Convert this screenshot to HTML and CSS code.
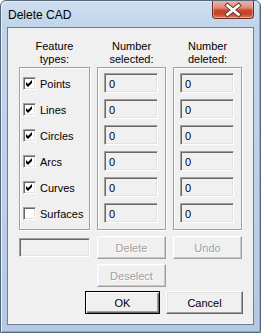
FILE: index.html
```html
<!DOCTYPE html>
<html>
<head>
<meta charset="utf-8">
<title>Delete CAD</title>
<link rel="stylesheet" href="styles.css">
</head>
<body>
<div class="window">
  <div class="titlebar">
    <span class="title">Delete CAD</span>
    <div class="close">
      <svg width="42" height="17" viewBox="0 0 42 17">
        <path d="M15.5 4.5 L26.5 13.5 M26.5 4.5 L15.5 13.5" stroke="#6b3a34" stroke-width="4.6" stroke-linecap="square" fill="none"/>
        <path d="M15.5 4.5 L26.5 13.5 M26.5 4.5 L15.5 13.5" stroke="#ffffff" stroke-width="2.6" stroke-linecap="square" fill="none"/>
      </svg>
    </div>
  </div>
  <div class="client">
    <div class="cols">
      <div class="head">Feature<br>types:</div>
      <div class="head">Number<br>selected:</div>
      <div class="head">Number<br>deleted:</div>

      <div class="group types">
        <div class="chk-row"><span class="chk"><svg width="9" height="9" viewBox="0 0 9 9"><polygon points="1,3 3,5 7,1 7,4 3,8 1,6" fill="#000"/></svg></span><span>Points</span></div>
        <div class="chk-row"><span class="chk"><svg width="9" height="9" viewBox="0 0 9 9"><polygon points="1,3 3,5 7,1 7,4 3,8 1,6" fill="#000"/></svg></span><span>Lines</span></div>
        <div class="chk-row"><span class="chk"><svg width="9" height="9" viewBox="0 0 9 9"><polygon points="1,3 3,5 7,1 7,4 3,8 1,6" fill="#000"/></svg></span><span>Circles</span></div>
        <div class="chk-row"><span class="chk"><svg width="9" height="9" viewBox="0 0 9 9"><polygon points="1,3 3,5 7,1 7,4 3,8 1,6" fill="#000"/></svg></span><span>Arcs</span></div>
        <div class="chk-row"><span class="chk"><svg width="9" height="9" viewBox="0 0 9 9"><polygon points="1,3 3,5 7,1 7,4 3,8 1,6" fill="#000"/></svg></span><span>Curves</span></div>
        <div class="chk-row"><span class="chk"></span><span>Surfaces</span></div>
      </div>

      <div class="group nums">
        <div class="field">0</div>
        <div class="field">0</div>
        <div class="field">0</div>
        <div class="field">0</div>
        <div class="field">0</div>
        <div class="field">0</div>
      </div>

      <div class="group nums">
        <div class="field">0</div>
        <div class="field">0</div>
        <div class="field">0</div>
        <div class="field">0</div>
        <div class="field">0</div>
        <div class="field">0</div>
      </div>

      <div class="field blank"></div>
      <button class="btn dis row1">Delete</button>
      <button class="btn dis row1">Undo</button>

      <div></div>
      <button class="btn dis row2">Deselect</button>
      <div></div>
    </div>
    <div class="actions">
      <button class="btn def ok">OK</button>
      <button class="btn cancel">Cancel</button>
    </div>
  </div>
</div>
</body>
</html>
```
FILE: styles.css
```css
* { box-sizing: border-box; }
html, body { margin: 0; padding: 0; }
body {
  width: 261px;
  height: 333px;
  overflow: hidden;
  background: #ffffff;
  font-family: "Liberation Sans", Arial, sans-serif;
}
.window {
  width: 261px;
  height: 333px;
  border: 1px solid #56677c;
  border-radius: 6px 6px 0 0;
  background: linear-gradient(180deg, #cfdff0 0px, #c0d4ea 26px, #bcd0e8 200px, #b3c9e3 333px);
  padding: 0 6px 7px 6px;
  display: flex;
  flex-direction: column;
  box-shadow: inset 1px 1px 0 #e6eff8, inset -1px -1px 0 #8fa9c8;
}
.titlebar {
  height: 26px;
  display: flex;
  justify-content: space-between;
  align-items: flex-start;
  margin: 0 0 0 0;
}
.title {
  font-family: "Liberation Sans", Arial, sans-serif;
  font-size: 12px;
  color: #000;
  padding: 7px 0 0 1px;
  line-height: 14px;
}
.close {
  width: 42px;
  height: 18px;
  margin-right: 0px;
  border: 1px solid #6a2e25;
  border-top: none;
  border-radius: 0 0 4px 4px;
  background: linear-gradient(180deg, #eab3a6 0%, #dc8c78 40%, #c8472e 55%, #c2432b 75%, #d97a5f 100%);
  box-shadow: inset 0 -1px 0 rgba(255,200,180,0.6), inset 1px 0 0 rgba(255,220,210,0.4), inset -1px 0 0 rgba(255,220,210,0.4);
}
.close svg { display: block; margin: 0 0 0 -1px; }
.client {
  flex: 1;
  border: 1px solid #6f7f92;
  background: #f0f0f0;
  padding: 12px 10px 0 11px;
  font-size: 11px;
  color: #000;
}
.cols {
  display: grid;
  grid-template-columns: 71px 69px 69px;
  column-gap: 7px;
}
.head {
  text-align: center;
  line-height: 13px;
  height: 26px;
  margin-bottom: 1px;
  padding-left: 0;
}
.group {
  height: 163px;
  border: 1px solid #a0a0a0;
  box-shadow: inset 1px 1px 0 #ffffff, 1px 1px 0 #ffffff;
  padding-top: 5px;
  display: flex;
  flex-direction: column;
  gap: 6px;
}
.types { padding-left: 3px; }
.nums { padding-left: 6px; }
.chk-row {
  height: 20px;
  display: flex;
  align-items: center;
  gap: 4px;
  padding-top: 1px;
}
.chk {
  width: 13px;
  height: 13px;
  flex: none;
  border: 1px solid;
  border-color: #a0a0a0 #ffffff #ffffff #a0a0a0;
  box-shadow: inset 1px 1px 0 #696969, inset -1px -1px 0 #e3e3e3;
  background: #fff;
  padding: 1px;
  margin-top: -1px;
}
.chk svg { display: block; }
.field {
  width: 54px;
  height: 20px;
  border: 1px solid;
  border-color: #a0a0a0 #ffffff #ffffff #a0a0a0;
  box-shadow: inset 1px 1px 0 #696969, inset -1px -1px 0 #e3e3e3;
  background: #f0f0f0;
  padding: 4px 0 0 4px;
  line-height: 12px;
  font-size: 11px;
  color: #000;
}
.field.blank {
  width: 71px;
  height: 19px;
  margin-top: 8px;
}
.btn {
  font-family: "Liberation Sans", Arial, sans-serif;
  font-size: 11px;
  color: #000;
  background: #f0f0f0;
  border: 1px solid;
  border-color: #ffffff #696969 #696969 #ffffff;
  box-shadow: inset -1px -1px 0 #a0a0a0, inset 1px 1px 0 #e3e3e3;
  padding: 0;
  height: 23px;
  margin: 0;
}
.btn.dis {
  color: #a0a0a0;
  text-shadow: 1px 1px 0 #ffffff;
  border-color: #ffffff #a0a0a0 #a0a0a0 #ffffff;
  box-shadow: inset -1px -1px 0 #c8c8c8, inset 1px 1px 0 #f6f6f6;
}
.row1 { margin-top: 6px; width: 69px; }
.row2 { margin-top: 5px; width: 69px; }
.actions {
  display: flex;
  justify-content: flex-end;
  gap: 6px;
  margin-top: 4px;
}
.ok { width: 75px; }
.cancel { width: 77px; }
.btn.def {
  border: 1px solid #000;
  box-shadow: inset 1px 1px 0 #ffffff, inset -1px -1px 0 #696969, inset -2px -2px 0 #a0a0a0;
}
```
